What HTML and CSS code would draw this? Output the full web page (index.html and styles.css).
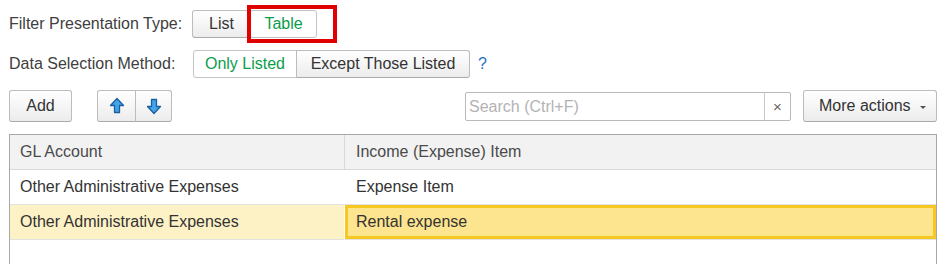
FILE: index.html
```html
<!DOCTYPE html>
<html>
<head>
<meta charset="utf-8">
<link rel="stylesheet" href="styles.css">
</head>
<body>
<div class="page">
  <div class="row r1">
    <span class="label">Filter Presentation Type:</span>
    <div class="seg">
      <span class="btn w-list">List</span>
      <span class="btn on w-table">Table</span>
      <span class="hl"></span>
    </div>
  </div>
  <div class="row r2">
    <span class="label">Data Selection Method:</span>
    <div class="seg">
      <span class="btn on w-only">Only Listed</span>
      <span class="btn w-except">Except Those Listed</span>
    </div>
    <span class="help">?</span>
  </div>
  <div class="row r3">
    <span class="btn tall w-add">Add</span>
    <div class="seg arrows">
      <span class="btn tall w-arrow">
        <svg width="16" height="18" viewBox="0 0 16 18"><path d="M8 1.5 L14.5 8.5 L10.5 8.5 L10.5 15.5 L5.5 15.5 L5.5 8.5 L1.5 8.5 Z" fill="#41a5ea" stroke="#1c5f9e" stroke-width="1.3" stroke-linejoin="round"/></svg>
      </span>
      <span class="btn tall w-arrow">
        <svg width="16" height="18" viewBox="0 0 16 18"><path d="M8 16.5 L14.5 9.5 L10.5 9.5 L10.5 2.5 L5.5 2.5 L5.5 9.5 L1.5 9.5 Z" fill="#41a5ea" stroke="#1c5f9e" stroke-width="1.3" stroke-linejoin="round"/></svg>
      </span>
    </div>
    <div class="search">
      <span class="ph">Search (Ctrl+F)</span>
      <span class="clear">×</span>
    </div>
    <span class="btn tall more">More actions <span class="caret"></span></span>
  </div>
  <div class="grid">
    <div class="hd c1">GL Account</div>
    <div class="hd c2">Income (Expense) Item</div>
    <div class="cell c1">Other Administrative Expenses</div>
    <div class="cell c2">Expense Item</div>
    <div class="cell c1 sel-row">Other Administrative Expenses</div>
    <div class="cell c2 sel-cell">Rental expense</div>
  </div>
</div>
</body>
</html>
```

FILE: styles.css
```css
* { box-sizing: border-box; }
html, body { margin: 0; padding: 0; background: #fff; overflow: hidden; }
body {
  font-family: "Liberation Sans", Arial, sans-serif;
  font-size: 16px;
  color: #333;
  width: 950px;
  height: 264px;
}
.page { padding: 0 13px 0 9px; }
.row { display: flex; align-items: center; }
.r1 { margin-top: 10px; height: 28px; }
.r2 { margin-top: 12px; height: 28px; }
.r3 { margin-top: 12px; height: 32px; }
.label { width: 183px; color: #404040; }
.r2 .label { width: 184px; }
.seg { display: flex; position: relative; height: 100%; }
.btn {
  display: flex; align-items: center; justify-content: center;
  height: 28px;
  border: 1px solid #bcbcbc;
  border-bottom-color: #a9a9a9;
  border-radius: 3px;
  background: linear-gradient(#ffffff, #ececec);
  color: #333;
  white-space: nowrap;
}
.seg .btn + .btn { margin-left: -1px; }
.seg .btn:first-child { border-top-right-radius: 0; border-bottom-right-radius: 0; }
.seg .btn:nth-child(2) { border-top-left-radius: 0; border-bottom-left-radius: 0; }
.btn.on { background: #fff; color: #0a9d4a; border-color: #c4c4c4; }
.btn.tall { height: 32px; }
.w-list { width: 59px; }
.w-table { width: 67px; }
.w-only { width: 104px; }
.w-except { width: 174px; }
.w-add { width: 63px; }
.w-arrow { width: 39px; }
.arrows { margin-left: 25px; }
.arrows .btn:nth-child(2) { width: 37px; }
.hl {
  position: absolute;
  left: 55px; top: -5px;
  width: 90px; height: 38px;
  border: 4px solid #e00000;
}
.help { margin-left: 8px; color: #1e73c4; font-size: 16px; }
.search {
  margin-left: auto;
  width: 326px; height: 29px;
  border: 1px solid #b9b9b9;
  border-radius: 2px;
  display: flex; align-items: center;
  margin-top: 1px;
}
.ph { flex: 1; color: #b3b3b3; padding-left: 3px; }
.clear {
  width: 26px; height: 100%;
  border-left: 1px solid #c8c8c8;
  display: flex; align-items: center; justify-content: center;
  color: #666; font-size: 15px;
}
.more { margin-left: 12px; width: 134px; justify-content: flex-start; padding-left: 15px; }
.caret {
  display: inline-block; margin-left: 9px; margin-top: 2px;
  border-left: 3px solid transparent; border-right: 3px solid transparent;
  border-top: 3px solid #555;
}
.grid {
  margin-top: 12px;
  display: grid;
  grid-template-columns: 335px 1fr;
  grid-auto-rows: 35px;
  border: 1px solid #a8a8a8;
  border-bottom: none;
  height: 140px;
  align-content: start;
}
.hd {
  background: #f2f2f2;
  border-bottom: 1px solid #d9d9d9;
  display: flex; align-items: center;
  color: #4a4a4a;
  padding-left: 10px;
}
.hd.c1 { border-right: 1px solid #d9d9d9; }
.hd.c2 { padding-left: 11px; }
.cell {
  display: flex; align-items: center;
  border-bottom: 1px solid #e2e2e2;
  padding-left: 10px;
  color: #333;
}
.cell.c2 { padding-left: 11px; }
.sel-row { background: #fdf2c6; border-right: 1px solid #fff; }
.sel-cell { background: #fde48e; box-shadow: inset 0 0 0 3px #f8c822; }
```
